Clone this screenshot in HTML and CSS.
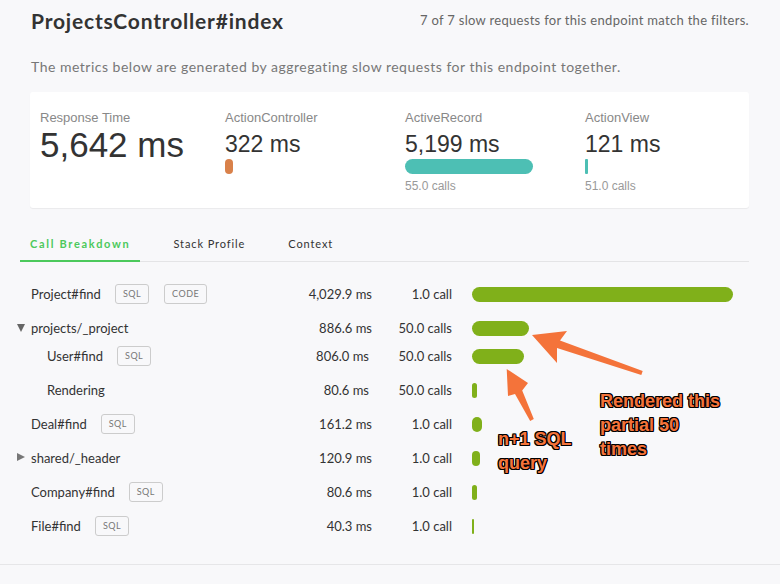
FILE: index.html
```html
<!DOCTYPE html>
<html>
<head>
<meta charset="utf-8">
<link rel="stylesheet" href="styles.css">
</head>
<body>
<div class="page">
  <div class="content">
    <header class="head">
      <h1 class="title">ProjectsController#index</h1>
      <div class="match">7 of 7 slow requests for this endpoint match the filters.</div>
    </header>
    <p class="subtitle">The metrics below are generated by aggregating slow requests for this endpoint together.</p>

    <section class="card">
      <div class="metric">
        <div class="m-label">Response Time</div>
        <div class="m-big">5,642 ms</div>
      </div>
      <div class="metric">
        <div class="m-label">ActionController</div>
        <div class="m-val">322 ms</div>
        <div class="m-bar orange" style="width:8px"></div>
      </div>
      <div class="metric">
        <div class="m-label">ActiveRecord</div>
        <div class="m-val">5,199 ms</div>
        <div class="m-bar teal" style="width:128px"></div>
        <div class="m-calls">55.0 calls</div>
      </div>
      <div class="metric">
        <div class="m-label">ActionView</div>
        <div class="m-val">121 ms</div>
        <div class="m-bar teal thin" style="width:3px"></div>
        <div class="m-calls">51.0 calls</div>
      </div>
    </section>

    <nav class="tabs">
      <div class="tab active">Call Breakdown</div>
      <div class="tab">Stack Profile</div>
      <div class="tab">Context</div>
    </nav>

    <div class="rows">
      <div class="row">
        <div class="name"><span class="label">Project#find</span><span class="badge">SQL</span><span class="badge">CODE</span></div>
        <div class="ms">4,029.9 ms</div>
        <div class="calls">1.0 call</div>
        <div class="barcell"><div class="bar" style="width:261px"></div></div>
      </div>
      <div class="row">
        <div class="name"><span class="caret down"></span><span class="label">projects/_project</span></div>
        <div class="ms">886.6 ms</div>
        <div class="calls">50.0 calls</div>
        <div class="barcell"><div class="bar" style="width:57px"></div></div>
      </div>
      <div class="children">
        <div class="row">
          <div class="name nested"><span class="label">User#find</span><span class="badge">SQL</span></div>
          <div class="ms nested-ms">806.0 ms</div>
          <div class="calls">50.0 calls</div>
          <div class="barcell"><div class="bar" style="width:52px"></div></div>
        </div>
        <div class="row">
          <div class="name nested"><span class="label">Rendering</span></div>
          <div class="ms nested-ms">80.6 ms</div>
          <div class="calls">50.0 calls</div>
          <div class="barcell"><div class="bar" style="width:5px"></div></div>
        </div>
      </div>
      <div class="row">
        <div class="name"><span class="label">Deal#find</span><span class="badge">SQL</span></div>
        <div class="ms">161.2 ms</div>
        <div class="calls">1.0 call</div>
        <div class="barcell"><div class="bar" style="width:10px"></div></div>
      </div>
      <div class="row">
        <div class="name"><span class="caret right"></span><span class="label">shared/_header</span></div>
        <div class="ms">120.9 ms</div>
        <div class="calls">1.0 call</div>
        <div class="barcell"><div class="bar" style="width:8px"></div></div>
      </div>
      <div class="row">
        <div class="name"><span class="label">Company#find</span><span class="badge">SQL</span></div>
        <div class="ms">80.6 ms</div>
        <div class="calls">1.0 call</div>
        <div class="barcell"><div class="bar" style="width:5px"></div></div>
      </div>
      <div class="row">
        <div class="name"><span class="label">File#find</span><span class="badge">SQL</span></div>
        <div class="ms">40.3 ms</div>
        <div class="calls">1.0 call</div>
        <div class="barcell"><div class="bar" style="width:2px"></div></div>
      </div>
    </div>
  </div>

  <svg class="arrows" width="780" height="584" viewBox="0 0 780 584">
    <polygon points="532,335 567,331 560,340.4 642.7,371 641.3,375 557,348 557,363" fill="#f4733a"/>
    <polygon points="506.7,369 528,383 522.2,390.4 533.8,419 530.2,421 515,394 508,396" fill="#f4733a"/>
  </svg>
  <div class="note note-render">Rendered this<br>partial 50<br>times</div>
  <div class="note note-sql">n+1 SQL<br>query</div>
</div>
</body>
</html>
```

FILE: styles.css
```css
* { box-sizing: border-box; }
html, body { margin: 0; padding: 0; }
body {
  background: #f8f8fa;
  font-family: Lato, "Noto Sans", sans-serif;
  color: #333;
}
.page {
  position: relative;
  width: 780px;
  height: 584px;
  overflow: hidden;
}
.content {
  padding: 9px 31px 21px 30px;
  border-bottom: 1px solid #e6e6e8;
}
.head {
  display: flex;
  justify-content: space-between;
  align-items: center;
  height: 24px;
}
.title {
  margin: 0 0 0 1px;
  font-size: 21px;
  line-height: 24px;
  font-weight: 700;
  letter-spacing: 0.8px;
  color: #333;
}
.match {
  font-size: 13px;
  letter-spacing: 0.3px;
  color: #666;
  line-height: 24px;
  margin-top: -2px;
}
.subtitle {
  margin: 25px 0 0 1px;
  font-size: 14px;
  letter-spacing: 0.5px;
  line-height: 18px;
  color: #777;
}
.card {
  margin-top: 16px;
  background: #fff;
  border-radius: 3px;
  box-shadow: 0 1px 1px rgba(0,0,0,0.06);
  height: 116px;
  padding: 18px 10px 0 10px;
  display: grid;
  grid-template-columns: 185px 180px 180px 1fr;
  font-family: "Liberation Sans", Arial, sans-serif;
}
.m-label {
  font-size: 13px;
  line-height: 16px;
  color: #888;
}
.m-big {
  font-size: 35px;
  line-height: 38px;
  color: #333;
}
.m-val {
  font-size: 23px;
  line-height: 26px;
  color: #333;
  margin-top: 5px;
}
.m-bar {
  height: 15px;
  border-radius: 8px;
  margin-top: 2px;
}
.m-bar.thin { border-radius: 1px; }
.orange { background: #d9814a; }
.teal { background: #4dbfb4; }
.m-calls {
  font-size: 12px;
  line-height: 14px;
  color: #999;
  margin-top: 5px;
}
.tabs {
  margin: 29px 0 0 -10px;
  display: flex;
  gap: 23px;
  border-bottom: 1px solid #e4e4e6;
}
.tab {
  padding: 0 10px 9px;
  font-size: 11px;
  line-height: 14px;
  letter-spacing: 0.9px;
  color: #333;
  border-bottom: 2px solid transparent;
  margin-bottom: -1px;
}
.tab.active {
  color: #4cc95c;
  font-weight: 700;
  letter-spacing: 1.7px;
  border-bottom-color: #4cc95c;
}
.rows {
  margin-left: -13px;
  padding-top: 15px;
}
.row {
  display: grid;
  grid-template-columns: 1fr 90px 80px 297px;
  height: 34px;
  align-items: center;
  font-size: 13px;
}
.children { margin-top: -6px; }
.name {
  display: flex;
  align-items: center;
  padding-left: 14px;
  position: relative;
}
.name.nested { padding-left: 30px; }
.caret {
  position: absolute;
  left: 0;
  width: 0;
  height: 0;
}
.caret.down {
  top: 4px;
  border-left: 4px solid transparent;
  border-right: 4px solid transparent;
  border-top: 8px solid #666;
}
.caret.right {
  top: 3px;
  border-top: 4.5px solid transparent;
  border-bottom: 4.5px solid transparent;
  border-left: 8px solid #777;
}
.label { color: #333; }
.badge {
  margin-left: 15px;
  height: 20px;
  padding: 0 7px;
  border: 1px solid #ccc;
  border-radius: 3px;
  font-size: 9px;
  letter-spacing: 0.5px;
  line-height: 18px;
  color: #777;
}
.name .label + .badge { margin-left: 14px; }
.ms { text-align: right; color: #333; }
.nested-ms { padding-right: 3px; }
.calls { text-align: right; color: #333; }
.barcell { padding-left: 20px; }
.bar {
  height: 15px;
  background: #80b01a;
  border-radius: 8px;
}
.arrows {
  position: absolute;
  left: 0;
  top: 0;
  pointer-events: none;
}
.note {
  position: absolute;
  font-family: "Liberation Sans", Arial, sans-serif;
  font-weight: 700;
  font-size: 18px;
  line-height: 24px;
  color: #f4733a;
  text-shadow: 1px 0 0 #000, -1px 0 0 #000, 0 1px 0 #000, 0 -1px 0 #000, 1px 1px 0 #000, -1px -1px 0 #000, 1px -1px 0 #000, -1px 1px 0 #000;
}
.note-render { left: 600px; top: 389px; }
.note-sql { left: 498px; top: 427px; }
```
